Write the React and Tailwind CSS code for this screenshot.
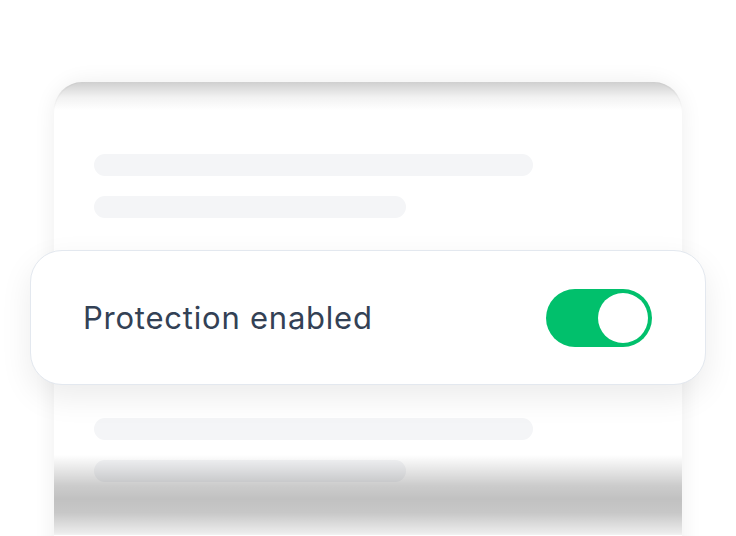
import React, { useState } from "react";

function Bar({ wide }) {
  return (
    <div
      className={
        wide
          ? "h-[22px] w-[439px] rounded-full bg-[#f4f5f7]"
          : "h-[22px] w-[312px] rounded-full bg-[#f4f5f7]"
      }
    />
  );
}

function Toggle({ on, onChange }) {
  return (
    <button
      type="button"
      onClick={() => onChange(!on)}
      className={
        on
          ? "flex h-[58px] w-[106px] items-center justify-end rounded-full bg-[#01c06c] p-[4px]"
          : "flex h-[58px] w-[106px] items-center justify-start rounded-full bg-[#d1d5db] p-[4px]"
      }
    >
      <span className="block h-[50px] w-[50px] rounded-full bg-white" />
    </button>
  );
}

export default function App() {
  const [enabled, setEnabled] = useState(true);

  return (
    <div
      className="h-[536px] w-[736px] overflow-hidden bg-white"
      style={{ fontFamily: "Inter, 'Noto Sans', sans-serif" }}
    >
      <div className="relative mx-[54px] mt-[82px] h-[480px] rounded-t-[32px] bg-white shadow-[0_0_22px_rgba(0,0,0,0.07)]">
        {/* top inner shade */}
        <div className="pointer-events-none absolute inset-x-0 top-0 h-[28px] overflow-hidden rounded-t-[32px] bg-[linear-gradient(to_bottom,rgba(0,0,0,0.19),rgba(0,0,0,0.05)_55%,rgba(0,0,0,0))]" />

        <div className="flex flex-col pt-[72px]">
          <div className="flex flex-col gap-[20px] pl-[40px]">
            <Bar wide />
            <Bar />
          </div>

          <div className="relative z-10 -mx-[24px] mt-[32px] flex h-[135px] items-center justify-between rounded-[32px] border border-[#e3e8ef] bg-white pl-[52px] pr-[53px] shadow-[0_12px_32px_rgba(0,0,0,0.08)]">
            <span className="text-[31px] leading-none tracking-[0.025em] text-[#334155]">
              Protection enabled
            </span>
            <Toggle on={enabled} onChange={setEnabled} />
          </div>

          <div className="mt-[33px] flex flex-col gap-[20px] pl-[40px]">
            <Bar wide />
            <Bar />
          </div>
        </div>

        {/* bottom fade */}
        <div className="pointer-events-none absolute inset-x-0 top-[373px] h-[80px] bg-[linear-gradient(to_bottom,rgba(0,0,0,0),rgba(0,0,0,0.2)_38%,rgba(0,0,0,0.245)_55%,rgba(0,0,0,0.22)_72%,rgba(0,0,0,0.08)_97%,rgba(0,0,0,0.05))]" />
      </div>
    </div>
  );
}
